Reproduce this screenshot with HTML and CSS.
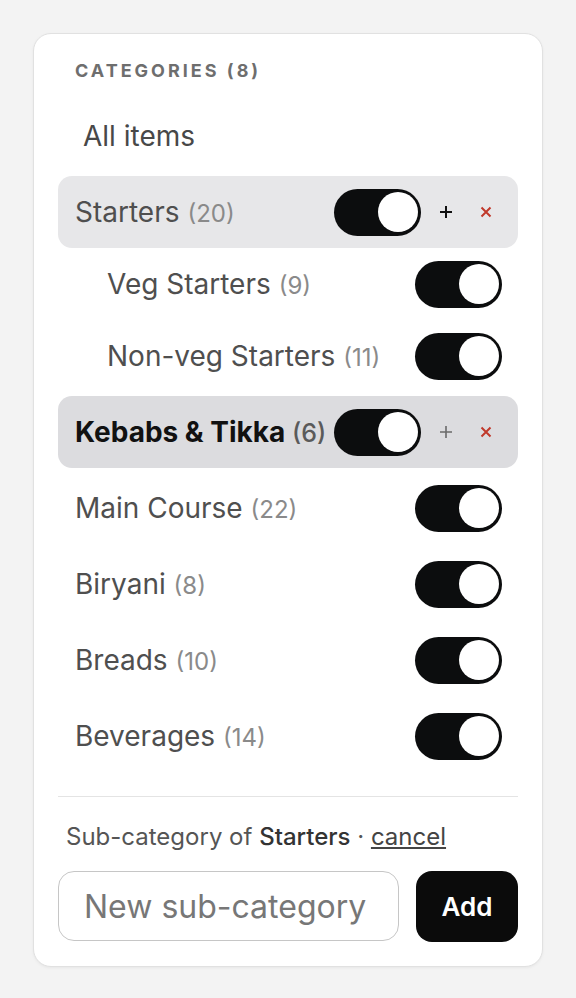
FILE: index.html
```html
<!DOCTYPE html>
<html lang="en">
<head>
	<meta charset="UTF-8">
	<title>Categories</title>
	<link rel="stylesheet" href="styles.css">
</head>
<body>
	<div class="panel">
		<h3 class="panel-title">Categories (8)</h3>

		<!--分类列表-->
		<ul class="cat-list">
			<li><div class="cat-row all">All items</div></li>

			<li>
				<div class="cat-row active">
					<span class="name">Starters <em>(20)</em></span>
					<span class="toggle on"></span>
					<button class="act plus"><svg viewBox="0 0 14 14"><path d="M7 1v12M1 7h12"/></svg></button>
					<button class="act del"><svg viewBox="0 0 12 12"><path d="M1.5 1.5l9 9M10.5 1.5l-9 9"/></svg></button>
				</div>
				<ul class="sub-list">
					<li class="cat-row sub">
						<span class="name">Veg Starters <em>(9)</em></span>
						<span class="toggle on"></span>
					</li>
					<li class="cat-row sub">
						<span class="name">Non-veg Starters <em>(11)</em></span>
						<span class="toggle on"></span>
					</li>
				</ul>
			</li>

			<li>
				<div class="cat-row hover">
					<span class="name">Kebabs &amp; Tikka <em>(6)</em></span>
					<span class="toggle on"></span>
					<button class="act plus"><svg viewBox="0 0 14 14"><path d="M7 1v12M1 7h12"/></svg></button>
					<button class="act del"><svg viewBox="0 0 12 12"><path d="M1.5 1.5l9 9M10.5 1.5l-9 9"/></svg></button>
				</div>
			</li>

			<li><div class="cat-row"><span class="name">Main Course <em>(22)</em></span><span class="toggle on"></span></div></li>
			<li><div class="cat-row"><span class="name">Biryani <em>(8)</em></span><span class="toggle on"></span></div></li>
			<li><div class="cat-row"><span class="name">Breads <em>(10)</em></span><span class="toggle on"></span></div></li>
			<li><div class="cat-row"><span class="name">Beverages <em>(14)</em></span><span class="toggle on"></span></div></li>
		</ul>

		<!--新增子分类-->
		<div class="add-form">
			<p class="hint">Sub-category of <b>Starters</b> · <a href="#">cancel</a></p>
			<div class="add-row">
				<input type="text" placeholder="New sub-category">
				<button class="add-btn">Add</button>
			</div>
		</div>
	</div>
</body>
</html>
```

FILE: styles.css
```css
*{
	padding: 0;
	margin: 0;
	box-sizing: border-box;
}
body{
	background-color: #f3f3f3;
	font-family: Inter, "Noto Sans", sans-serif;
	padding: 33px;
}
.panel{
	width: 510px;
	background: #fff;
	border: 1px solid #e1e1e1;
	border-radius: 18px;
	padding: 24px;
	box-shadow: 0 1px 3px rgba(0,0,0,0.05);
}
.panel-title{
	font-size: 18px;
	line-height: 26px;
	font-weight: 700;
	letter-spacing: 3px;
	text-transform: uppercase;
	color: #6e6e6e;
	padding-left: 17px;
	margin-bottom: 16px;
}
.cat-list{
	list-style: none;
	display: flex;
	flex-direction: column;
	gap: 4px;
}
.sub-list{
	list-style: none;
}
.cat-row{
	height: 72px;
	display: flex;
	align-items: center;
	padding: 0 16px 0 17px;
	border-radius: 14px;
	font-size: 28px;
	color: #4f4f4f;
}
.cat-row.all{
	padding-left: 25px;
	color: #484848;
}
.cat-row.sub{
	padding-left: 49px;
}
.cat-row.active{
	background: #e7e7e9;
}
.cat-row.hover{
	background: #dcdcdf;
	font-weight: 700;
	color: #111;
}
.name em{
	font-style: normal;
	font-size: 24px;
	color: #8a8a8a;
}
.cat-row.hover .name em{
	font-weight: 500;
	color: #5a5a5a;
	font-size: 25px;
}
.toggle{
	margin-left: auto;
	width: 87px;
	height: 47px;
	border-radius: 24px;
	background: #0c0d0e;
	position: relative;
	flex-shrink: 0;
}
.toggle:after{
	content: '';
	position: absolute;
	top: 3.5px;
	right: 3px;
	width: 40px;
	height: 40px;
	border-radius: 50%;
	background: #fff;
}
.act{
	width: 32px;
	height: 32px;
	border: none;
	background: none;
	display: flex;
	align-items: center;
	justify-content: center;
	margin-left: 8px;
}
.act svg{
	fill: none;
	stroke-width: 2;
}
.plus{
	margin-left: 9px;
}
.plus svg{
	width: 14px;
	height: 14px;
	stroke: #111;
}
.hover .plus svg{
	stroke: #6a6a6a;
	stroke-width: 1.6;
}
.del svg{
	width: 12px;
	height: 12px;
	stroke: #c0392b;
}
.add-form{
	margin-top: 24px;
	border-top: 1.5px solid #e4e4e4;
	padding-top: 25px;
}
.hint{
	font-size: 24px;
	line-height: 30px;
	color: #555;
	padding-left: 8px;
	margin-bottom: 19px;
}
.hint b{
	font-weight: 500;
	color: #333;
}
.hint a{
	color: #444;
}
.add-row{
	display: flex;
	gap: 17px;
}
.add-row input{
	width: 341px;
	height: 70px;
	border: 1.5px solid #c6c6c6;
	border-radius: 16px;
	padding-left: 25px;
	font-family: Inter, "Noto Sans", sans-serif;
	font-size: 32px;
	color: #333;
	outline: none;
}
.add-row input::placeholder{
	color: #777;
}
.add-btn{
	flex: 1;
	height: 71px;
	border: none;
	border-radius: 16px;
	background: #0b0b0b;
	color: #fff;
	font-family: Inter, "Noto Sans", sans-serif;
	font-size: 26px;
	font-weight: 600;
}
```
